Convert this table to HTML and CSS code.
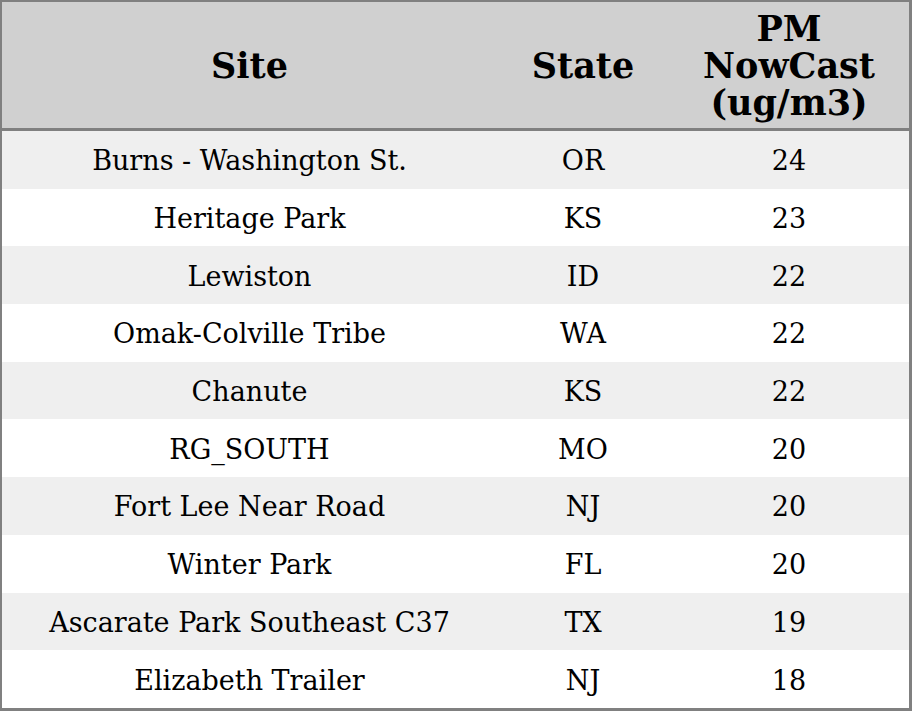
FILE: index.html
```html
<!DOCTYPE html>
<html>
<head>
<meta charset="utf-8">
<link rel="stylesheet" href="styles.css">
</head>
<body>
<table class="grid">
  <colgroup>
    <col class="c-site">
    <col class="c-state">
    <col class="c-pm">
  </colgroup>
  <thead>
    <tr>
      <th>Site</th>
      <th>State</th>
      <th>PM<br>NowCast<br>(ug/m3)</th>
    </tr>
  </thead>
  <tbody>
    <tr><td>Burns - Washington St.</td><td>OR</td><td>24</td></tr>
    <tr><td>Heritage Park</td><td>KS</td><td>23</td></tr>
    <tr><td>Lewiston</td><td>ID</td><td>22</td></tr>
    <tr><td>Omak-Colville Tribe</td><td>WA</td><td>22</td></tr>
    <tr><td>Chanute</td><td>KS</td><td>22</td></tr>
    <tr><td>RG_SOUTH</td><td>MO</td><td>20</td></tr>
    <tr><td>Fort Lee Near Road</td><td>NJ</td><td>20</td></tr>
    <tr><td>Winter Park</td><td>FL</td><td>20</td></tr>
    <tr><td>Ascarate Park Southeast C37</td><td>TX</td><td>19</td></tr>
    <tr><td>Elizabeth Trailer</td><td>NJ</td><td>18</td></tr>
  </tbody>
</table>
</body>
</html>
```
FILE: styles.css
```css
html, body {
  margin: 0;
  padding: 0;
  background: #ffffff;
}
.grid {
  box-sizing: border-box;
  width: 912px;
  height: 711px;
  border-collapse: separate;
  border-spacing: 0;
  border-style: solid;
  border-color: #808080;
  border-width: 2px 3px 3px 2px;
  font-family: "DejaVu Serif", serif;
  color: #000;
  table-layout: fixed;
}
.c-site { width: 495px; }
.c-state { width: 172px; }
.c-pm { width: 240px; }
.grid th {
  background: #d0d0d0;
  font-size: 35px;
  font-weight: bold;
  line-height: 37px;
  height: 126px;
  padding: 0;
  text-align: center;
  vertical-align: middle;
  border-bottom: 3px solid #808080;
}
.grid td {
  font-size: 27px;
  height: 55px;
  padding: 2px 0 0;
  text-align: center;
  vertical-align: middle;
}
.grid tbody tr:nth-child(odd) td {
  background: #efefef;
}
```
